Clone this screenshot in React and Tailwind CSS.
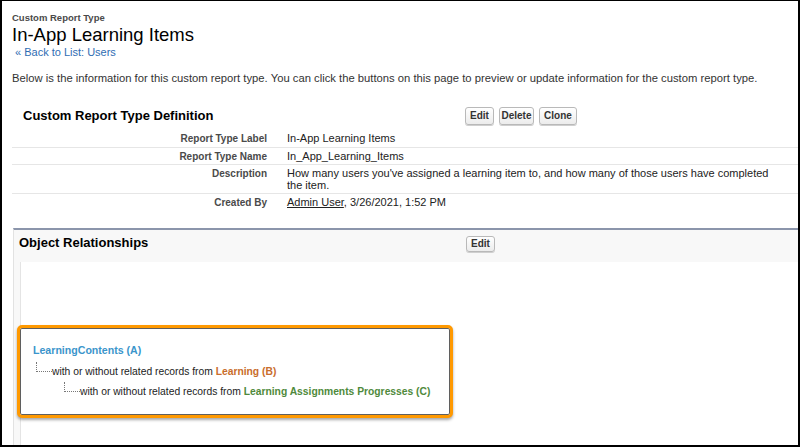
const rows = [
  { label: "Report Type Label", value: "In-App Learning Items" },
  { label: "Report Type Name", value: "In_App_Learning_Items" },
  {
    label: "Description",
    value: (
      <>
        How many users you've assigned a learning item to, and how many of those users have completed
        <br />
        the item.
      </>
    ),
    tall: true,
  },
  {
    label: "Created By",
    value: (
      <>
        <span className="underline">Admin User</span>, 3/26/2021, 1:52 PM
      </>
    ),
    last: true,
  },
];

function Btn({ w, children }) {
  return (
    <button
      className={`${w} block h-[18px] rounded-[3px] border border-[#b9b9b9] bg-gradient-to-b from-white to-[#ececec] text-center text-[10px] font-bold leading-[16px] text-[#333] shadow-[0_1px_0_#cfcfcf]`}
    >
      {children}
    </button>
  );
}

function Branch({ indent, children }) {
  return (
    <div className={`flex h-[20px] items-start whitespace-nowrap ${indent}`}>
      <span className="mt-[1px] inline-block h-[10px] w-[16px] shrink-0 border-b border-l border-dotted border-[#777]" />
      <span className="self-center leading-[13px]">{children}</span>
    </div>
  );
}

export default function App() {
  return (
    <div className="box-border h-[447px] w-[800px] overflow-hidden border-2 border-t border-black bg-white font-['Liberation_Sans',Arial,sans-serif] text-[#222]">
      <div className="ml-[10px] mt-[11px]">
        <p className="text-[9.5px] font-bold leading-[12px] text-[#4a4a4a]">Custom Report Type</p>
        <h1 className="text-[18.5px] leading-[22px] text-black">In-App Learning Items</h1>
        <a className="ml-[3px] block text-[11px] leading-[13px] text-[#2f6db3]">« Back to List: Users</a>
        <p className="mt-[12px] whitespace-nowrap text-[11.25px] leading-[14px] text-[#333]">
          Below is the information for this custom report type. You can click the buttons on this page to preview or update information for the custom report type.
        </p>
      </div>

      <section className="ml-[10px] mt-[22px]">
        <div className="flex h-[18px] items-center">
          <h2 className="ml-[11px] w-[442px] text-[13px] font-bold text-black">Custom Report Type Definition</h2>
          <div className="flex gap-[5px]">
            <Btn w="w-[29px]">Edit</Btn>
            <Btn w="w-[35px]">Delete</Btn>
            <Btn w="w-[38px]">Clone</Btn>
          </div>
        </div>
        <div className="mt-[3px]">
          {rows.map((r, i) => (
            <div
              key={r.label}
              className={`grid grid-cols-[263px_1fr] ${r.last ? "" : "border-b border-[#e6e6e6]"} ${
                i === 0 ? "pb-[2px] pt-[4px]" : r.tall ? "pb-[2px] pt-[2px]" : "pb-[1px] pt-[2px]"
              }`}
            >
              <div className="pr-[8px] text-right text-[10px] font-bold leading-[13px] text-[#4a4a4a]">{r.label}</div>
              <div className={`pl-[12px] text-[11px] text-[#222] ${r.tall ? "leading-[12px]" : "leading-[13px]"}`}>{r.value}</div>
            </div>
          ))}
        </div>
      </section>

      <section className="ml-[11px] mt-[18px] border-l border-t-2 border-l-[#e2e2e2] border-t-[#8b95ab] bg-[#f8f8f8]">
        <div className="flex h-[32px] items-start pt-[5px]">
          <h2 className="ml-[5px] w-[447px] text-[13px] font-bold leading-[16px] text-black">Object Relationships</h2>
          <div className="mt-[1px] flex">
            <Btn w="w-[29px] !h-[16px] !leading-[14px]">Edit</Btn>
          </div>
        </div>
        <div className="ml-[6px] h-[200px] border-l border-[#e4e4e4] bg-white pt-[63px]">
          <div className="-ml-[4px] w-[436px] rounded-[5px] border-[3px] border-[#ff9900] bg-white pb-[14px] pl-[13px] pt-[13px] text-[10.3px] shadow-[inset_0_0_0_1px_#5f5f5f,0_2px_3px_rgba(0,0,0,0.35)]">
            <div className="flex h-[20px] items-center text-[10.6px] font-bold text-[#3b95cb]">LearningContents (A)</div>
            <Branch indent="ml-[3px]">
              with or without related records from <span className="font-bold text-[#c96d2c]">Learning (B)</span>
            </Branch>
            <Branch indent="ml-[31px]">
              with or without related records from{" "}
              <span className="font-bold text-[#4f8a3c]">Learning Assignments Progresses (C)</span>
            </Branch>
          </div>
        </div>
      </section>
    </div>
  );
}
